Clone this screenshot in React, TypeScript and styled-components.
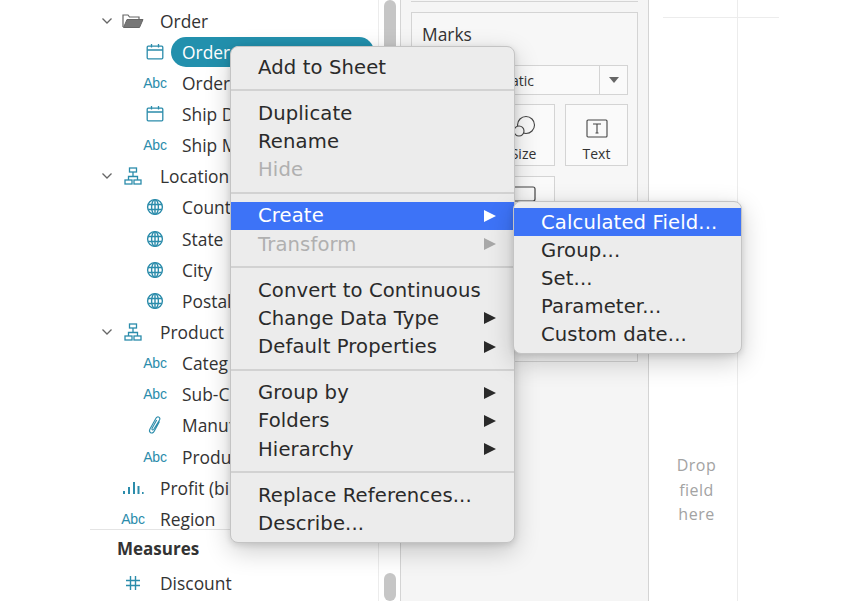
import styled, { createGlobalStyle } from 'styled-components'
import { ReactNode } from 'react'

const GlobalStyle = createGlobalStyle`
  html, body {
    margin: 0;
    padding: 0;
    width: 868px;
    height: 601px;
    overflow: hidden;
    background: #fff;
  }
`

const TEAL = '#2b8cab'

const CalendarIcon = () => (
  <svg width="18" height="18" viewBox="0 0 18 18" fill="none" stroke={TEAL} strokeWidth="1.3">
    <rect x="1.2" y="3.2" width="15.6" height="12.6" rx="1" />
    <path d="M1.2 7h15.600M5.500 1v3.600M12.500 1v3.600" />
  </svg>
)

const HierarchyIcon = () => (
  <svg width="18" height="18" viewBox="0 0 18 18" fill="none" stroke={TEAL} strokeWidth="1.3">
    <rect x="5.5" y="1" width="7" height="4" />
    <rect x="1" y="13" width="7" height="4" />
    <rect x="10" y="13" width="7" height="4" />
    <path d="M9 5v4.5M4.5 13V9.5h9V13" />
  </svg>
)

const GlobeIcon = () => (
  <svg width="18" height="18" viewBox="0 0 18 18" fill="none" stroke={TEAL} strokeWidth="1.4">
    <circle cx="9" cy="9" r="7.4" />
    <ellipse cx="9" cy="9" rx="3.4" ry="7.4" />
    <path d="M2.2 6.5h13.6M2.2 11.5h13.6M9 1.8v14.4" />
  </svg>
)

const ClipIcon = () => (
  <svg width="18" height="20" viewBox="0 0 18 20" fill="none" stroke={TEAL} strokeWidth="1.1">
    <path d="M13.5 6.5L8.2 16.3c-.9 1.6-2.4 2.1-3.6 1.4-1.2-.7-1.4-2.3-.5-3.9l6-10.7c.6-1.1 1.8-1.6 2.8-1s1.2 1.8.6 2.9L7.8 14.2c-.4.6-1 .9-1.5.6s-.6-.9-.2-1.6l4.6-8.2" />
  </svg>
)

const BinsIcon = () => (
  <svg width="22" height="14" viewBox="0 0 22 14" fill={TEAL}>
    <rect x="1" y="10" width="2" height="3" />
    <rect x="6" y="6" width="2" height="7" />
    <rect x="11" y="1" width="2" height="12" />
    <rect x="15.5" y="5" width="2" height="8" />
    <rect x="20" y="11" width="1.6" height="2" />
  </svg>
)

const HashIcon = () => (
  <svg width="16" height="16" viewBox="0 0 16 16" fill="none" stroke={TEAL} strokeWidth="1.4">
    <path d="M5.5 1v14M10.5 1v14M1 5.5h14M1 10.5h14" />
  </svg>
)

const FolderIcon = () => (
  <svg width="22" height="16" viewBox="0 0 22 16">
    <path d="M1 14V2h5l1.5 2H17v2" fill="none" stroke="#666" strokeWidth="1.2" />
    <path d="M1.5 14.5L5 6.5h16l-3.5 8z" fill="#777" stroke="#666" strokeWidth="1" />
  </svg>
)

const Chevron = () => (
  <svg width="12" height="8" viewBox="0 0 12 8" fill="none" stroke="#666" strokeWidth="1.3">
    <path d="M1.5 1.5L6 6l4.5-4.5" />
  </svg>
)

const Page = styled.div`
  display: flex;
  width: 868px;
  height: 601px;
  position: relative;
  overflow: hidden;
  background: #fff;
`

const DataPane = styled.div`
  width: 288px;
  margin-left: 90px;
  padding-top: 5px;
  box-sizing: border-box;
  font-family: 'Open Sans', sans-serif;
  color: #333;
`

const Row = styled.div<{ $nested?: boolean }>`
  height: 31.15px;
  display: flex;
  align-items: center;
  padding-left: ${p => (p.$nested ? 52 : 6)}px;
  font-size: 17.4px;
  white-space: nowrap;
`

const Caret = styled.span`
  width: 22px;
  margin-right: 2px;
  display: flex;
  justify-content: center;
`

const IconSlot = styled.span`
  width: 26px;
  margin-right: 14px;
  display: flex;
  align-items: center;
  justify-content: center;
  flex-shrink: 0;
`

const AbcMark = styled.span`
  font-family: 'Liberation Sans', sans-serif;
  font-size: 14px;
  color: ${TEAL};
  letter-spacing: -0.2px;
`

const Pill = styled.span`
  width: 203px;
  height: 30px;
  margin-left: -11px;
  padding-left: 11px;
  box-sizing: border-box;
  display: flex;
  align-items: center;
  border-radius: 15px;
  background: #2290ad;
  color: #fff;
`

const PaneRule = styled.div`
  margin-top: -5px;
  border-top: 1px solid #e4e4e4;
`

const MeasuresTitle = styled.div`
  height: 37px;
  display: flex;
  align-items: center;
  padding-left: 27px;
  font-size: 17px;
  font-weight: 700;
  color: #333;
`

const ScrollTrack = styled.div`
  width: 22px;
  padding-left: 5px;
  display: flex;
  flex-direction: column;
  justify-content: space-between;
  border-left: 1px solid #ececec;
  box-sizing: border-box;
`

const ScrollThumb = styled.div<{ $h: number }>`
  width: 12px;
  height: ${p => p.$h}px;
  border-radius: 6px;
  background: #c6c6c6;
`

const MarksPane = styled.div`
  width: 249px;
  height: 601px;
  box-sizing: border-box;
  padding: 0 10px;
  background: #f5f5f5;
  border-left: 1px solid #d4d4d4;
  border-right: 1px solid #d4d4d4;
  font-family: 'Open Sans', sans-serif;
  color: #333;
  display: flex;
  flex-direction: column;
`

const TopCard = styled.div`
  height: 1px;
  margin-bottom: 10px;
  border-bottom: 1px solid #d4d4d4;
`

const MarksCard = styled.div`
  height: 350px;
  box-sizing: border-box;
  padding: 9px 10px;
  border: 1px solid #d4d4d4;
  background: #f7f7f7;
`

const MarksTitle = styled.div`
  font-size: 17.4px;
  line-height: 24px;
`

const MarkSelect = styled.div`
  height: 30px;
  margin: 19px -1px 0 0;
  box-sizing: border-box;
  border: 1px solid #d4d4d4;
  background: #fafafa;
  display: flex;
  align-items: center;
  font-size: 14px;
`

const SelectText = styled.span`
  flex: 1;
  text-align: right;
  padding-right: 65px;
`

const SelectArrow = styled.span`
  width: 27px;
  height: 100%;
  border-left: 1px solid #d4d4d4;
  display: flex;
  align-items: center;
  justify-content: center;

  &::after {
    content: '';
    border-left: 5px solid transparent;
    border-right: 5px solid transparent;
    border-top: 6px solid #666;
  }
`

const TileGrid = styled.div`
  display: grid;
  grid-template-columns: repeat(3, 63px);
  grid-auto-rows: 62px;
  gap: 10px;
  margin: 9px 0 0 -3px;
`

const Tile = styled.div<{ $iconOnly?: boolean }>`
  box-sizing: border-box;
  border: 1px solid #d4d4d4;
  background: #fafafa;
  display: flex;
  flex-direction: column;
  align-items: center;
  justify-content: ${p => (p.$iconOnly ? 'flex-start' : 'flex-end')};
  gap: 5px;
  padding: ${p => (p.$iconOnly ? '9px 0 0' : '0 0 1px')};
  font-size: 14px;
  line-height: 20px;
`

const Canvas = styled.div`
  flex: 1;
  position: relative;
  display: flex;
  font-family: 'Open Sans', sans-serif;
`

const DropColumn = styled.div`
  width: 89px;
  height: 601px;
  box-sizing: border-box;
  padding: 453px 0 0 7px;
  border-right: 1px solid #ececec;
  text-align: center;
  font-size: 16px;
  line-height: 24.5px;
  letter-spacing: 0.5px;
  color: #a3a3a3;
`

const HeaderRule = styled.div`
  position: absolute;
  top: 17px;
  left: 14px;
  width: 116px;
  border-top: 1px solid #ececec;
`

const Menu = styled.div<{ $left: number; $top: number; $width: number }>`
  position: absolute;
  left: ${p => p.$left}px;
  top: ${p => p.$top}px;
  width: ${p => p.$width}px;
  box-sizing: border-box;
  padding: 6px 0 4px;
  background: #ececec;
  border: 1px solid #c4c4c4;
  border-radius: 8px;
  box-shadow: 0 2px 6px rgba(0, 0, 0, 0.12), 0 8px 26px rgba(0, 0, 0, 0.2);
  font-family: 'DejaVu Sans', sans-serif;
  font-size: 19.6px;
  letter-spacing: 0.12px;
  color: #2a2a2a;
`

const Item = styled.div<{ $active?: boolean; $disabled?: boolean }>`
  height: 28.2px;
  display: flex;
  align-items: center;
  justify-content: space-between;
  padding: 0 18px 0 27px;
  white-space: nowrap;
  background: ${p => (p.$active ? '#3d73f7' : 'transparent')};
  color: ${p => (p.$active ? '#fff' : p.$disabled ? '#b0b0b0' : '#2a2a2a')};
`

const Arrow = styled.span<{ $light?: boolean; $dim?: boolean }>`
  border-top: 6px solid transparent;
  border-bottom: 6px solid transparent;
  border-left: 12px solid ${p => (p.$light ? '#fff' : p.$dim ? '#a8a8a8' : '#2a2a2a')};
`

const Divider = styled.div`
  margin: 8px 0;
  border-top: 2px solid #d2d2d2;
`

type Field = { icon: ReactNode; label: string; selected?: boolean }

const orderFields: Field[] = [
  { icon: <CalendarIcon />, label: 'Order D', selected: true },
  { icon: <AbcMark>Abc</AbcMark>, label: 'Order' },
  { icon: <CalendarIcon />, label: 'Ship D' },
  { icon: <AbcMark>Abc</AbcMark>, label: 'Ship M' },
]
const locationFields: Field[] = [
  { icon: <GlobeIcon />, label: 'Count' },
  { icon: <GlobeIcon />, label: 'State' },
  { icon: <GlobeIcon />, label: 'City' },
  { icon: <GlobeIcon />, label: 'Postal' },
]
const productFields: Field[] = [
  { icon: <AbcMark>Abc</AbcMark>, label: 'Categ' },
  { icon: <AbcMark>Abc</AbcMark>, label: 'Sub-C' },
  { icon: <ClipIcon />, label: 'Manuf' },
  { icon: <AbcMark>Abc</AbcMark>, label: 'Produ' },
]

const Group = ({ icon, label, fields }: { icon: ReactNode; label: string; fields: Field[] }) => (
  <>
    <Row>
      <Caret><Chevron /></Caret>
      <IconSlot>{icon}</IconSlot>
      {label}
    </Row>
    {fields.map(f => (
      <Row $nested key={f.label}>
        <IconSlot>{f.icon}</IconSlot>
        {f.selected ? <Pill>{f.label}</Pill> : f.label}
      </Row>
    ))}
  </>
)

const App = () => {
  return (
    <Page>
      <GlobalStyle />
      <DataPane>
        <Group icon={<FolderIcon />} label="Order" fields={orderFields} />
        <Group icon={<HierarchyIcon />} label="Location" fields={locationFields} />
        <Group icon={<HierarchyIcon />} label="Product" fields={productFields} />
        <Row>
          <Caret />
          <IconSlot><BinsIcon /></IconSlot>
          Profit (bi
        </Row>
        <Row>
          <Caret />
          <IconSlot><AbcMark>Abc</AbcMark></IconSlot>
          Region
        </Row>
        <PaneRule />
        <MeasuresTitle>Measures</MeasuresTitle>
        <Row>
          <Caret />
          <IconSlot><HashIcon /></IconSlot>
          Discount
        </Row>
      </DataPane>
      <ScrollTrack>
        <ScrollThumb $h={140} />
        <ScrollThumb $h={28} />
      </ScrollTrack>
      <MarksPane>
        <TopCard />
        <MarksCard>
          <MarksTitle>Marks</MarksTitle>
          <MarkSelect>
            <SelectText>atic</SelectText>
            <SelectArrow />
          </MarkSelect>
          <TileGrid>
            <Tile />
            <Tile>
              <svg width="24" height="24" viewBox="0 0 24 24" fill="none" stroke="#444" strokeWidth="1.1">
                <circle cx="14" cy="10" r="8.5" />
                <circle cx="7" cy="16" r="5" fill="#fafafa" />
              </svg>
              Size
            </Tile>
            <Tile>
              <svg width="22" height="20" viewBox="0 0 22 20" fill="none" stroke="#444" strokeWidth="1.1">
                <rect x="1" y="1" width="20" height="17" rx="1" />
                <path d="M7 5h8M11 5v9M9.5 14h3" />
              </svg>
              Text
            </Tile>
            <Tile />
            <Tile $iconOnly>
              <svg width="24" height="16" viewBox="0 0 24 16" fill="none" stroke="#444" strokeWidth="1.2">
                <rect x="1" y="1" width="22" height="14" rx="2" />
              </svg>
            </Tile>
          </TileGrid>
        </MarksCard>
      </MarksPane>
      <Canvas>
        <HeaderRule />
        <DropColumn>Drop<br />field<br />here</DropColumn>
      </Canvas>
      <Menu $left={230} $top={46} $width={285}>
        <Item>Add to Sheet</Item>
        <Divider />
        <Item>Duplicate</Item>
        <Item>Rename</Item>
        <Item $disabled>Hide</Item>
        <Divider />
        <Item $active>Create<Arrow $light /></Item>
        <Item $disabled>Transform<Arrow $dim /></Item>
        <Divider />
        <Item>Convert to Continuous</Item>
        <Item>Change Data Type<Arrow /></Item>
        <Item>Default Properties<Arrow /></Item>
        <Divider />
        <Item>Group by<Arrow /></Item>
        <Item>Folders<Arrow /></Item>
        <Item>Hierarchy<Arrow /></Item>
        <Divider />
        <Item>Replace References...</Item>
        <Item>Describe...</Item>
      </Menu>
      <Menu $left={513} $top={201} $width={229}>
        <Item $active>Calculated Field...</Item>
        <Item>Group...</Item>
        <Item>Set...</Item>
        <Item>Parameter...</Item>
        <Item>Custom date...</Item>
      </Menu>
    </Page>
  )
}

export default App
